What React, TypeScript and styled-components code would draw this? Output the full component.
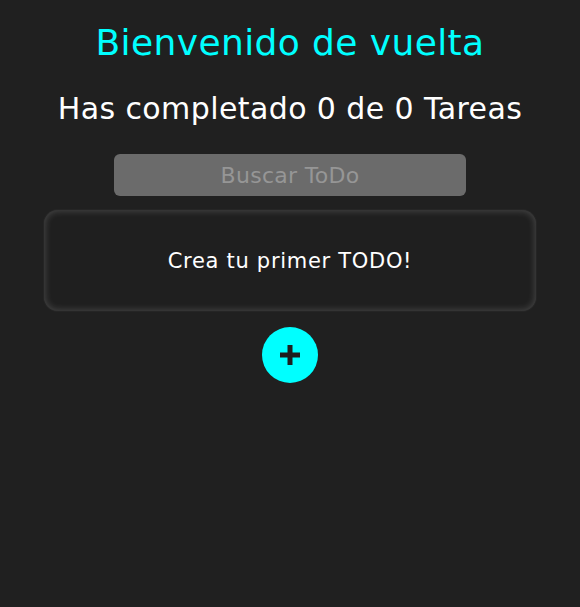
import React from "react";
import styled, { createGlobalStyle } from "styled-components";

const Global = createGlobalStyle`
  html, body { margin: 0; padding: 0; background: #202020; }
  body { font-family: "DejaVu Sans", "Open Sans", sans-serif; }
`;

const Page = styled.main`
  width: 580px;
  min-height: 607px;
  background: #202020;
  display: flex;
  flex-direction: column;
  align-items: center;
  padding-top: 23px;
  box-sizing: border-box;
`;

const Title = styled.h1`
  margin: 0;
  color: #00ffff;
  font-size: 36px;
  font-weight: 400;
  line-height: 40px;
  letter-spacing: 0.4px;
`;

const Counter = styled.h2`
  margin: 29px 0 0;
  color: #ffffff;
  font-size: 30px;
  font-weight: 400;
  line-height: 34px;
  letter-spacing: 0.4px;
`;

const Search = styled.input`
  margin-top: 28px;
  width: 352px;
  height: 42px;
  box-sizing: border-box;
  border: none;
  border-radius: 6px;
  background: #6b6b6b;
  color: #ffffff;
  font-family: inherit;
  font-size: 22px;
  letter-spacing: 0.3px;
  text-align: center;
  outline: none;
  &::placeholder { color: #969696; }
`;

const Card = styled.section`
  margin-top: 14px;
  width: 492px;
  height: 101px;
  box-sizing: border-box;
  border-radius: 14px;
  background: #1f1f1f;
  box-shadow: inset 0 0 7px 1px rgba(255, 255, 255, 0.18), 0 0 2px rgba(255, 255, 255, 0.1);
  display: flex;
  align-items: center;
  justify-content: center;
`;

const CardText = styled.p`
  margin: 0;
  color: #ffffff;
  font-size: 21px;
  letter-spacing: 0.7px;
`;

const AddButton = styled.button`
  margin-top: 16px;
  width: 56px;
  height: 56px;
  border-radius: 50%;
  border: none;
  background: #00ffff;
  display: flex;
  align-items: center;
  justify-content: center;
  padding: 0;
  cursor: pointer;
`;

export default function App() {
  return (
    <>
      <Global />
      <Page>
        <Title>Bienvenido de vuelta</Title>
        <Counter>Has completado 0 de 0 Tareas</Counter>
        <Search placeholder="Buscar ToDo" />
        <Card>
          <CardText>Crea tu primer TODO!</CardText>
        </Card>
        <AddButton aria-label="Agregar">
          <svg width="20" height="20" viewBox="0 0 20 20">
            <path d="M10 0v20M0 10h20" stroke="#1e1e1e" strokeWidth="5" strokeLinecap="butt" />
          </svg>
        </AddButton>
      </Page>
    </>
  );
}
